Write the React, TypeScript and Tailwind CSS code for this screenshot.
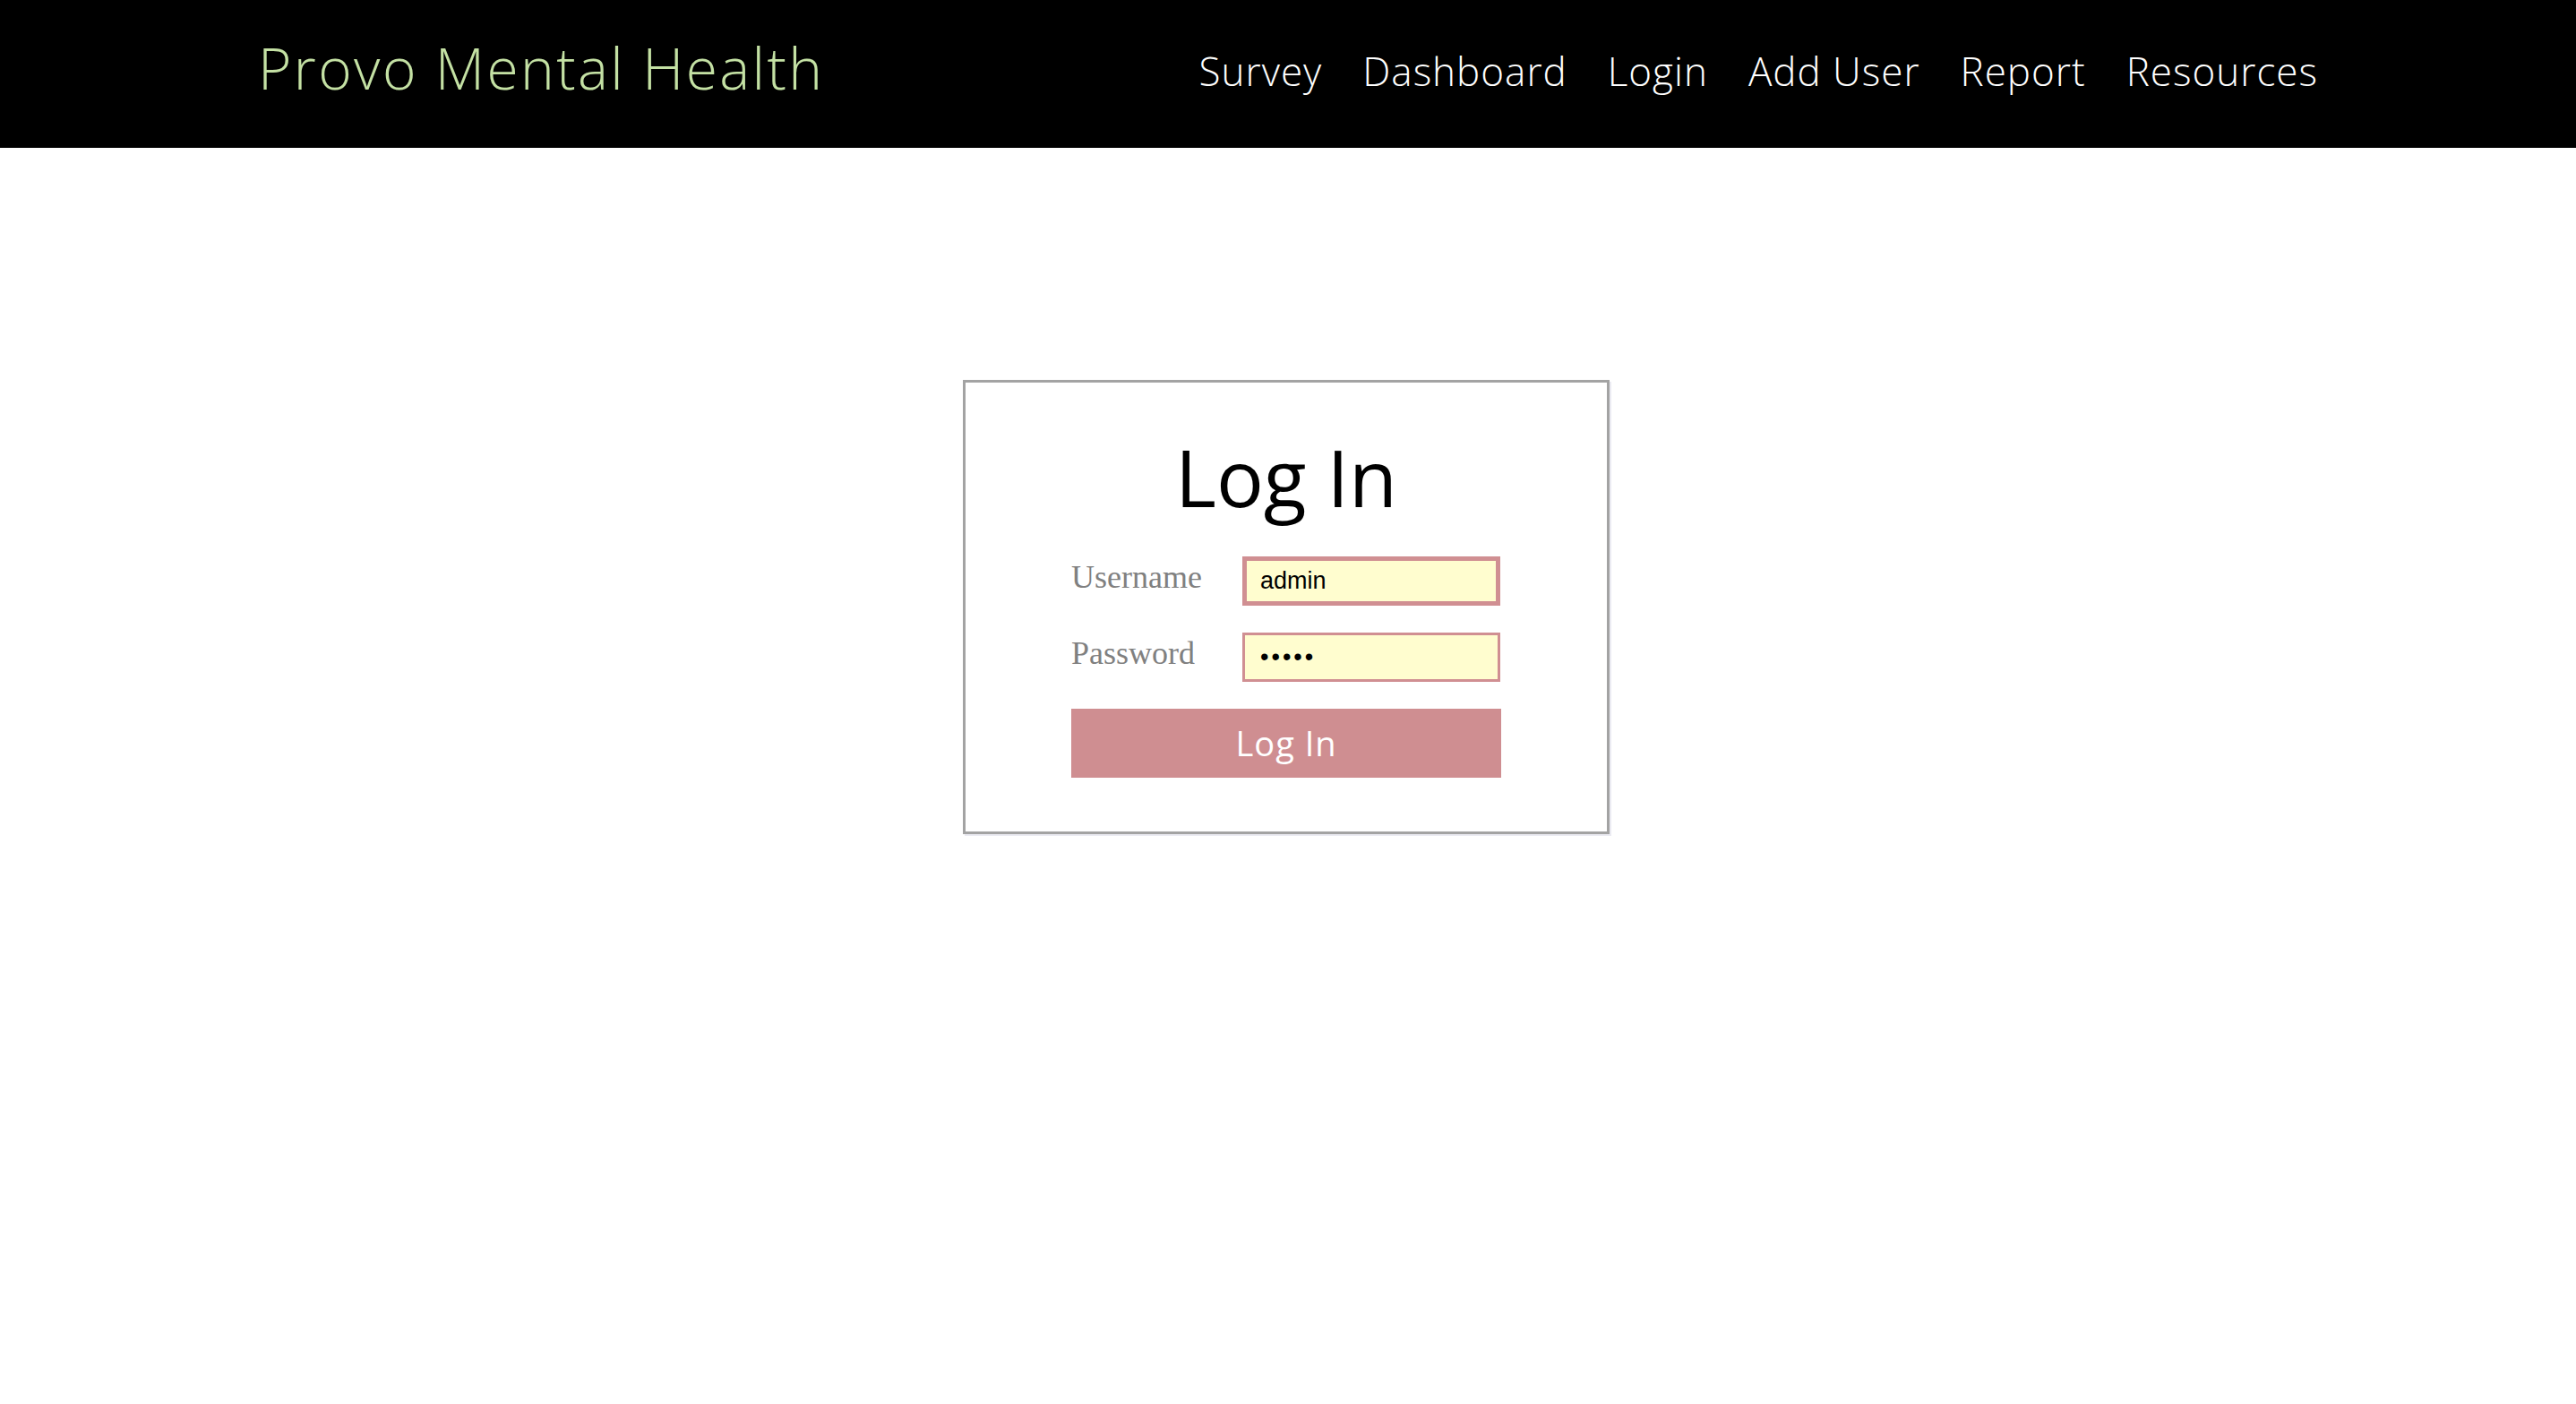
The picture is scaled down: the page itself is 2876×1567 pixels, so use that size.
const navLinks = ["Survey", "Dashboard", "Login", "Add User", "Report", "Resources"];

function Header() {
  return (
    <header className="h-[165px] bg-black flex justify-between px-[288px] font-['Open_Sans',sans-serif] font-light">
      <a className="pt-[44px] text-[64px] leading-none tracking-[2.4px] text-[#c4e1a4]">
        Provo Mental Health
      </a>
      <nav className="pt-[57px] flex gap-[45px] text-[44px] leading-none tracking-[1px] text-white">
        {navLinks.map((link) => (
          <a key={link}>{link}</a>
        ))}
      </nav>
    </header>
  );
}

function LoginCard() {
  return (
    <div className="w-[722px] -ml-[4px] border-[3px] border-[#a3a3a3] bg-white px-[118px] pt-[61px] pb-[60px] shadow-[2px_2px_0_0_#ebebf2]">
      <h1 className="text-center text-[88px] leading-none text-black font-['Open_Sans',sans-serif]">
        Log In
      </h1>
      <form className="mt-[45px] flex flex-col gap-[30px]">
        <div className="flex items-center">
          <label className="w-[191px] -mt-[10px] text-[36px] text-[#808080] font-['Liberation_Serif',serif]">
            Username
          </label>
          <input
            type="text"
            defaultValue="admin"
            readOnly
            className="w-[288px] h-[55px] border-[5px] border-[#d08f92] bg-[#fffdcf] pl-[15px] text-[27px] text-black font-['Liberation_Sans',Arial,sans-serif] outline-none"
          />
        </div>
        <div className="flex items-center">
          <label className="w-[191px] -mt-[10px] text-[36px] text-[#808080] font-['Liberation_Serif',serif]">
            Password
          </label>
          <input
            type="password"
            defaultValue="admin"
            readOnly
            className="w-[288px] h-[55px] border-[3px] border-[#d08f92] bg-[#fffdcf] pl-[17px] text-[27px] tracking-[3px] text-black font-['Liberation_Sans',Arial,sans-serif] outline-none"
          />
        </div>
        <button
          type="button"
          className="w-[480px] h-[77px] bg-[#cf8e91] text-white text-[38px] tracking-[1px] font-['Open_Sans',sans-serif]"
        >
          Log In
        </button>
      </form>
    </div>
  );
}

export default function App() {
  return (
    <div className="min-h-[1567px] bg-white">
      <Header />
      <main className="flex justify-center pt-[259px]">
        <LoginCard />
      </main>
    </div>
  );
}
